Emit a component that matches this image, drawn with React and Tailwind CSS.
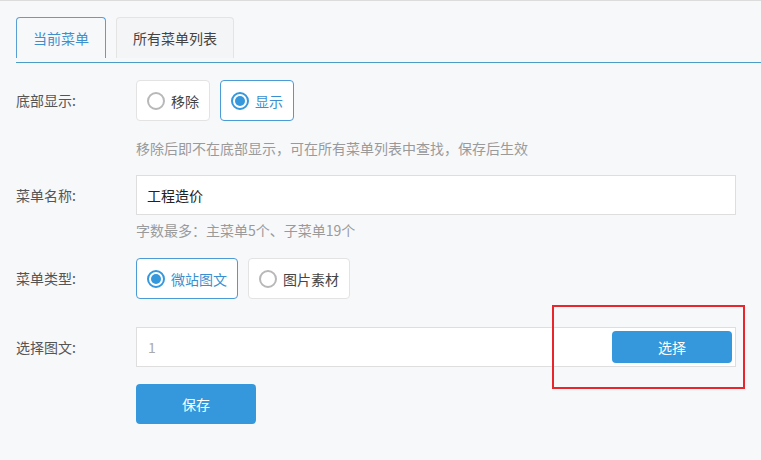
import { useState } from 'react';

function Radio({ label, checked, onClick }) {
  return (
    <button
      type="button"
      onClick={onClick}
      className={`h-[41px] flex items-center gap-[6px] pl-[10px] pr-[10px] rounded-[4px] border bg-white ${
        checked ? 'border-[#4a9bd6] text-[#3a8fd0]' : 'border-[#e3e3e3] text-[#444]'
      }`}
    >
      {checked ? (
        <span className="w-[18px] h-[18px] rounded-full border-[2px] border-[#3598dc] flex items-center justify-center">
          <span className="w-[10px] h-[10px] rounded-full bg-[#3598dc]" />
        </span>
      ) : (
        <span className="w-[18px] h-[18px] rounded-full border-[2px] border-[#b8b8b8]" />
      )}
      <span className="text-[14px] leading-none">{label}</span>
    </button>
  );
}

export default function App() {
  const [tab, setTab] = useState(0);
  const [show, setShow] = useState(true);
  const [type, setType] = useState(0);
  const [name, setName] = useState('工程造价');

  return (
    <div
      className="w-[761px] h-[460px] bg-[#f7f8fa] border-t border-[#dcdcdc] overflow-hidden text-[#555]"
      style={{ fontFamily: '"Noto Sans CJK SC", "Noto Sans", sans-serif' }}
    >
      {/* Tabs */}
      <div className="ml-4 mt-4 pb-[4px] border-b border-[#4b9cc6] flex items-end gap-[10px]">
        {['当前菜单', '所有菜单列表'].map((t, i) => (
          <button
            key={t}
            type="button"
            onClick={() => setTab(i)}
            className={`h-[41px] px-4 rounded-t-[4px] border border-b-0 text-[14px] ${
              tab === i
                ? 'border-[#5a9fd4] text-[#3f8fcc] bg-[#f7f8fa]'
                : 'border-[#e4e4e4] text-[#444] bg-[#f4f5f7]'
            }`}
          >
            {t}
          </button>
        ))}
      </div>

      <div className="pl-4 pr-[25px]">
        {/* 底部显示 */}
        <div className="mt-[17px] flex items-center">
          <div className="w-[120px] text-[14px]">底部显示:</div>
          <div className="flex gap-[10px]">
            <Radio label="移除" checked={!show} onClick={() => setShow(false)} />
            <Radio label="显示" checked={show} onClick={() => setShow(true)} />
          </div>
        </div>
        <div className="mt-[17px] ml-[120px] text-[14px] leading-[20px] text-[#9a9a9a]">
          移除后即不在底部显示，可在所有菜单列表中查找，保存后生效
        </div>

        {/* 菜单名称 */}
        <div className="mt-[17px] flex items-center">
          <div className="w-[120px] text-[14px]">菜单名称:</div>
          <input
            value={name}
            onChange={(e) => setName(e.target.value)}
            className="flex-1 h-[40px] bg-white border border-[#dedede] px-[10px] text-[14px] text-[#222] outline-none"
          />
        </div>
        <div className="mt-[5px] ml-[120px] text-[14px] leading-[20px] text-[#9a9a9a]">
          字数最多：主菜单5个、子菜单19个
        </div>

        {/* 菜单类型 */}
        <div className="mt-[18px] flex items-center">
          <div className="w-[120px] text-[14px]">菜单类型:</div>
          <div className="flex gap-[10px]">
            <Radio label="微站图文" checked={type === 0} onClick={() => setType(0)} />
            <Radio label="图片素材" checked={type === 1} onClick={() => setType(1)} />
          </div>
        </div>

        {/* 选择图文 */}
        <div className="mt-[28px] flex items-center">
          <div className="w-[120px] text-[14px]">选择图文:</div>
          <div className="relative flex-1 h-[40px] bg-white border border-[#dedede] flex items-center justify-between pl-[11px] pr-[3px]">
            <span className="text-[14px] text-[#aaa]">1</span>
            <button
              type="button"
              className="w-[120px] h-[32px] rounded-[4px] bg-[#3598dc] text-white text-[14px]"
            >
              选择
            </button>
            <div className="absolute left-[415px] top-[-23px] w-[193px] h-[84px] border-2 border-[#e8262b] pointer-events-none" />
          </div>
        </div>

        {/* 保存 */}
        <div className="mt-[17px] ml-[120px]">
          <button
            type="button"
            className="w-[120px] h-[40px] rounded-[4px] bg-[#3598dc] text-white text-[14px]"
          >
            保存
          </button>
        </div>
      </div>
    </div>
  );
}
